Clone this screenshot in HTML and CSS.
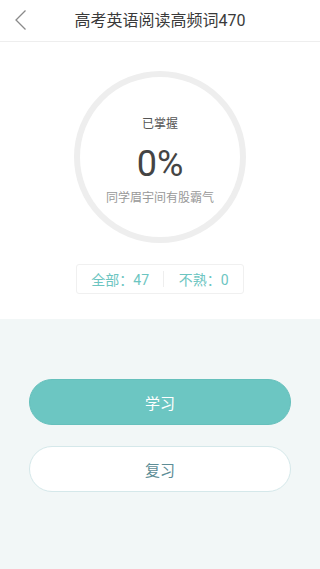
FILE: index.html
```html
<!DOCTYPE html>
<html lang="zh">
<head>
<meta charset="utf-8">
<link rel="stylesheet" href="styles.css">
</head>
<body>
<div class="page">
  <header class="header">
    <span class="back">
      <svg width="14" height="22" viewBox="0 0 14 22"><path d="M11.5 1.5 L2 11 L11.5 20.5" fill="none" stroke="#8a8a8a" stroke-width="1.3"/></svg>
    </span>
    <h1 class="title">高考英语阅读高频词470</h1>
  </header>
  <section class="top">
    <div class="ring">
      <div class="ring-label">已掌握</div>
      <div class="ring-value">0%</div>
      <div class="ring-sub">同学眉宇间有股霸气</div>
    </div>
    <div class="stats">
      <span class="stat">全部：47</span>
      <span class="divider"></span>
      <span class="stat">不熟：0</span>
    </div>
  </section>
  <section class="bottom">
    <button class="btn btn-primary">学习</button>
    <button class="btn btn-secondary">复习</button>
  </section>
</div>
</body>
</html>
```
FILE: styles.css
```css
* { box-sizing: border-box; }
html, body { margin: 0; padding: 0; }
body {
  font-family: Roboto, "Noto Sans CJK SC", sans-serif;
  background: #f2f7f7;
  width: 320px;
  height: 569px;
  overflow: hidden;
}
.page { display: flex; flex-direction: column; height: 569px; }
.header {
  height: 42px;
  background: #fff;
  border-bottom: 1px solid #eeeeee;
  display: flex;
  align-items: center;
  justify-content: center;
  position: relative;
}
.back {
  position: absolute;
  left: 14px;
  top: 9px;
  display: flex;
}
.title {
  margin: 0;
  font-size: 16px;
  font-weight: normal;
  color: #3a3a3a;
  line-height: 42px;
}
.top {
  background: #fff;
  height: 277px;
  display: flex;
  flex-direction: column;
  align-items: center;
  padding-top: 29px;
}
.ring {
  width: 172px;
  height: 172px;
  border-radius: 50%;
  border: 6px solid #eeeeee;
  display: flex;
  flex-direction: column;
  align-items: center;
  padding-top: 39px;
}
.ring-label {
  font-size: 12px;
  color: #555;
  line-height: 16px;
}
.ring-value {
  font-size: 36px;
  color: #444;
  line-height: 40px;
  margin-top: 12px;
}
.ring-sub {
  font-size: 12px;
  color: #999;
  line-height: 16px;
  margin-top: 6px;
}
.stats {
  margin-top: 21px;
  width: 168px;
  height: 30px;
  border: 1px solid #f0f0f0;
  border-radius: 3px;
  display: flex;
  align-items: center;
  justify-content: space-evenly;
  color: #6cc5c1;
  font-size: 14px;
}
.divider {
  width: 1px;
  height: 16px;
  background: #eeeeee;
}
.bottom {
  flex: 1;
  display: flex;
  flex-direction: column;
  align-items: center;
  padding-top: 60px;
  gap: 21px;
}
.btn {
  width: 262px;
  height: 46px;
  border-radius: 23px;
  font-family: Roboto, "Noto Sans CJK SC", sans-serif;
  font-size: 15px;
  cursor: pointer;
}
.btn-primary {
  background: #6cc6c2;
  border: 1px solid #66c0bc;
  color: #fff;
}
.btn-secondary {
  background: #fff;
  border: 1px solid #d5e8ea;
  color: #5d8d96;
}
```
